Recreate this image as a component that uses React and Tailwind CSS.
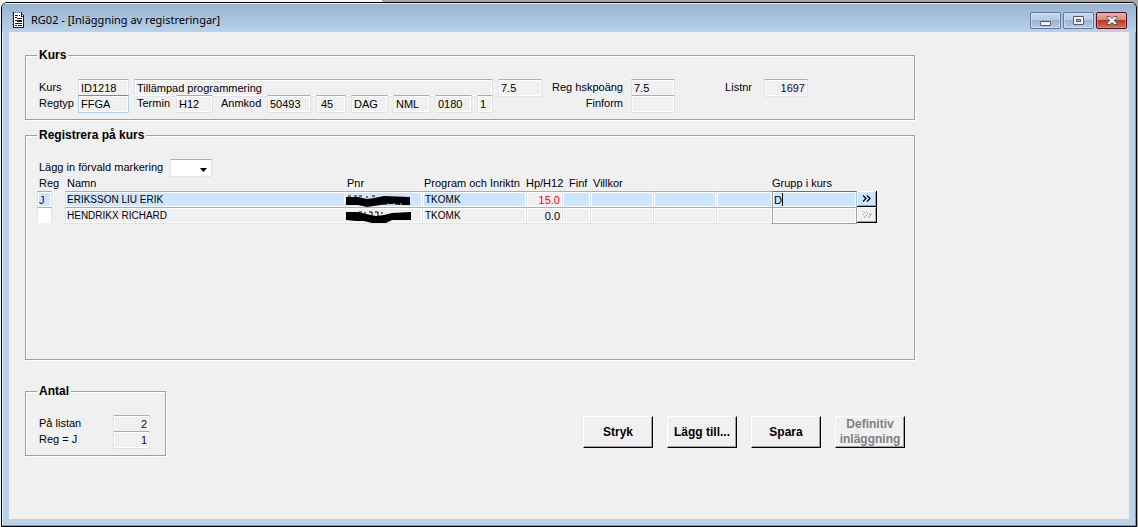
import { useState } from "react";
import clsx from "clsx";

const students = [
    { id: 1, reg: "J", name: "ERIKSSON LIU ERIK", program: "TKOMK", hp: "15.0", group: "D", active: true },
    { id: 2, reg: "", name: "HENDRIKX RICHARD", program: "TKOMK", hp: "0.0", group: "", active: false },
];

const Field = ({ id, label, value, hot, className }) => (
    <input
        id={id}
        aria-label={label}
        defaultValue={value}
        readOnly
        className={clsx(
            "h-[18px] bg-[#f0f0f0] border rounded-[1px] px-0.5 shadow-[inset_0_0_0_1px_#fff] outline-none",
            hot ? "border-[#b5cfe7] border-t-[#5794bf]" : "border-[#e2e3ea] border-t-[#abadb3]",
            className
        )}
    />
);

const Label = ({ htmlFor, className, children }) => (
    <label htmlFor={htmlFor} className={clsx("whitespace-nowrap leading-4", className)}>
        {children}
    </label>
);

const Group = ({ title, className, children }) => (
    <fieldset
        className={clsx(
            "min-w-0 border border-[#a0a0a0] shadow-[inset_1px_1px_#fff,1px_1px_#fff] px-[11px] pt-4",
            className
        )}
    >
        <legend className="bg-[#f0f0f0] px-0.5 h-4 text-xs leading-4 font-bold">{title}</legend>
        {children}
    </fieldset>
);

const ActionButton = ({ disabled, children }) => (
    <button
        type="button"
        disabled={disabled}
        className="w-[70px] h-8 flex items-center justify-center bg-[#f0f0f0] border border-white border-r-black border-b-black shadow-[inset_-1px_-1px_#a0a0a0] text-xs leading-[15px] font-bold disabled:text-[#808080]"
    >
        {children}
    </button>
);

const DocumentIcon = () => (
    <svg width="13" height="16" viewBox="0 0 13 16" shapeRendering="crispEdges">
        <path d="M1 1h8l3 3v11H1z" fill="#fff" />
        <path d="M1 0h1v15H1zM9 0h1v4h2v12H1v-1h10V5H9z" fill="#222" />
        <path d="M0 0h1v1H0zM3 0h1v1H3zM5 0h1v1H5zM7 0h1v1H7zM0 3h1v1H0zM0 6h1v1H0zM0 9h1v1H0zM0 12h1v1H0z" fill="#777" />
        <path d="M3 3h3v1H3zM7 3h1v1H7zM3 5h2v1H3zM5 6h5v1H5zM3 8h2v1H3zM5 8h5v2H5zM3 11h2v1H3zM5 11h5v1H5zM3 13h2v1H3zM6 13h4v1H6z" fill="#222" />
        <path d="M10 2h1v1h-1zM11 3h1v1h-1z" fill="#222" />
    </svg>
);

const WindowButton = ({ label, danger, children }) => (
    <button
        type="button"
        aria-label={label}
        className={clsx(
            "w-[31px] h-[17px] rounded-[2px] border flex items-center justify-center",
            danger
                ? "border-[#4c1020] bg-linear-[to_bottom,#eab0a5_0%,#db8b7c_46%,#b83a20_50%,#d4705c_100%] shadow-[inset_0_0_0_1px_#e9a99c80]"
                : "border-[#64779a] bg-linear-[to_bottom,#c6d8ea_0%,#b7cce2_46%,#98b3ce_50%,#b3cfe9_100%] shadow-[inset_0_0_0_1px_#d8e6f4aa]"
        )}
    >
        {children}
    </button>
);

const TitleBar = () => (
    <header className="h-[29px] shrink-0 flex items-center justify-between pl-[10px] pr-0.5 bg-linear-to-b from-[#98b3d1] to-[#b9d1ea] border-t border-white/70">
        <div className="flex items-center gap-[6px] pt-1">
            <DocumentIcon />
            <h1 className="font-['Noto_Sans',sans-serif] text-[11px] leading-4 whitespace-nowrap">
                RG02 - [Inläggning av registreringar]
            </h1>
        </div>
        <div className="flex gap-0.5 pt-1 pr-[7px]">
            <WindowButton label="Minimera">
                <svg width="11" height="13" viewBox="0 0 11 13">
                    <rect x=".5" y="7.5" width="10" height="4" rx=".5" fill="#f4f4f4" stroke="#535666" />
                </svg>
            </WindowButton>
            <WindowButton label="Återställ">
                <svg width="11" height="9" viewBox="0 0 11 9">
                    <rect x=".5" y=".5" width="10" height="8" rx=".5" fill="#f4f4f4" stroke="#535666" />
                    <rect x="3.5" y="3.5" width="4" height="2" fill="#a4c0e0" stroke="#535666" />
                </svg>
            </WindowButton>
            <WindowButton label="Stäng" danger>
                <svg width="12" height="9" viewBox="0 0 12 9">
                    <path
                        d="M1 .5h3l2 2 2-2h3v1L8.300 4.500 11 7.500v1H8l-2-2-2 2H1v-1l2.700-3L1 1.500z"
                        fill="#f4f4f4"
                        stroke="#535666"
                    />
                </svg>
            </WindowButton>
        </div>
    </header>
);

// Blacked out personal number
const Redacted = ({ variant }) => (
    <svg width="66" height="14" viewBox="0 0 66 14" className="block">
        {variant === 1 ? (
            <>
                <path d="M0 4L12 4L21 6L28 5L38 3L64 4L64 12L54 12L46 11L34 12L28 13L21 14L12 12L0 12z" />
                <path d="M2 3h3M8 3h3M13 3h3M21 5v-2M26 3h3" stroke="#000" />
                <path d="M41 11h2M47 11h2M54 11h2" stroke="#aab8c4" />
            </>
        ) : (
            <>
                <path d="M0 3L12 3L20 5L30 7L38 6L46 4L65 3L65 11L52 11L46 11L40 14L26 14L18 12L10 12L0 11z" />
                <path d="M13 3h3M19 5v-2M23 3h3v3M29 3h3v4M35 4h2" stroke="#000" fill="none" />
            </>
        )}
    </svg>
);

const CourseGroup = () => (
    <Group title="Kurs" className="h-[73px]">
        <div className="flex h-4 pl-0.5">
            <Label htmlFor="kurs" className="w-[39px]">Kurs</Label>
            <Field id="kurs" value="ID1218" className="w-[51px]" />
            <Field label="Kursnamn" value="Tillämpad programmering" className="w-[359px] ml-[5px]" />
            <Field label="Poäng" value="7.5" className="w-11 ml-[5px]" />
            <Label htmlFor="hskpoang" className="w-[81px] text-right">Reg hskpoäng</Label>
            <Field id="hskpoang" value="7.5" className="w-11 ml-2" />
            <Label htmlFor="listnr" className="w-[77px] text-right">Listnr</Label>
            <Field id="listnr" value="1697" className="w-11 ml-3 text-right text-[#300030]" />
        </div>
        <div className="flex h-4 pl-0.5">
            <Label htmlFor="regtyp" className="w-[39px]">Regtyp</Label>
            <Field id="regtyp" value="FFGA" hot className="w-[51px]" />
            <Label htmlFor="termin" className="w-[47px] pl-2">Termin</Label>
            <Field id="termin" value="H12" className="w-[37px]" />
            <Label htmlFor="anmkod" className="w-[54px] pl-2">Anmkod</Label>
            <div className="flex gap-[5px] w-[226px]">
                <Field id="anmkod" value="50493" className="w-11" />
                <Field label="Takt" value="45" className="w-[30px] pl-1" />
                <Field label="Tid" value="DAG" className="w-[37px]" />
                <Field label="Form" value="NML" className="w-[37px]" />
                <Field label="Ort" value="0180" className="w-[37px]" />
                <Field label="Grupp" value="1" className="w-4" />
            </div>
            <Label htmlFor="finform" className="w-[130px] text-right">Finform</Label>
            <Field id="finform" value="" className="w-11 ml-2" />
        </div>
    </Group>
);

const StudentRow = ({ student }) => {
    const [reg, setReg] = useState(student.reg);
    const [group, setGroup] = useState(student.group);
    const { active } = student;

    const cell = clsx(
        "h-4 p-0 text-[10px] leading-[15px] border-t border-t-[#a9abb5] border-l border-l-[#e0e1e9] shadow-[inset_0_0_0_1px_#fff]",
        active && "bg-[#cce6ff]"
    );

    return (
        <tr>
            <td className="p-0 h-4">
                <input
                    aria-label={`Reg ${student.name}`}
                    value={reg}
                    onChange={(e) => setReg(e.target.value)}
                    className={clsx(
                        "block w-[15px] h-4 border-t border-t-[#abadb3] border-x border-x-[#e2e3ea] px-px shadow-[inset_0_0_0_1px_#fff] outline-none",
                        active ? "bg-[#cce6ff] text-[#10106e]" : "bg-white"
                    )}
                />
            </td>
            <td className={clsx(cell, "pl-px")}>{student.name}</td>
            <td className={cell}><Redacted variant={student.id} /></td>
            <td className={clsx(cell, "pl-0.5")}>{student.program}</td>
            <td
                className={clsx(
                    "h-4 p-0 pr-0.5 text-right border-t border-t-[#a9abb5] border-l border-l-[#e0e1e9] shadow-[inset_0_0_0_1px_#fff]",
                    active && "text-[#f00020]"
                )}
            >
                {student.hp}
            </td>
            <td className={cell}></td>
            <td className={cell}></td>
            <td className={cell}></td>
            <td className={cell}></td>
            <td className="p-0 h-4">
                <div className="relative">
                    <input
                        aria-label={`Grupp i kurs ${student.name}`}
                        value={group}
                        onChange={(e) => setGroup(e.target.value)}
                        className={clsx(
                            "block w-full h-4 border-t border-x px-px shadow-[inset_0_0_0_1px_#fff] outline-none",
                            active
                                ? "bg-[#cce6ff] border-t-[#3d7bad] border-l-[#a0a0a0] border-r-[#a4c9e3]"
                                : "bg-[#f0f0f0] border-[#a0a0a0]"
                        )}
                    />
                    {active && <span className="absolute left-[10px] top-0.5 w-px h-[13px] bg-black" />}
                </div>
            </td>
            <td className="p-0 h-4">
                <button
                    type="button"
                    aria-label={`Visa mer ${student.name}`}
                    disabled={!active}
                    className={clsx(
                        "flex items-center justify-center w-5 h-4 border-r border-b border-black shadow-[inset_1px_1px_#fff,inset_-1px_-1px_#a0a0a0]",
                        active ? "bg-[#cce6ff]" : "bg-[#f0f0f0]"
                    )}
                >
                    {active ? (
                        <svg width="9" height="7" viewBox="0 0 9 7" fill="none" stroke="#000" strokeWidth="1.200">
                            <path d="M1 .5l3 3-3 3M5 .5l3 3-3 3" />
                        </svg>
                    ) : (
                        <svg width="10" height="8" viewBox="0 0 10 8" fill="#a0a0a0" shapeRendering="crispEdges">
                            <path d="M0 0h1v1H0zM2 1h1v1H2zM4 0h1v1H4zM5 2h1v1H5zM1 3h1v1H1zM8 2h1v1H8zM7 3h1v1H7zM9 3h1v1H9zM4 4h1v1H4zM3 5h1v1H3zM8 4h1v1H8zM2 6h1v1H2zM7 5h1v1H7zM6 6h1v1H6z" />
                        </svg>
                    )}
                </button>
            </td>
        </tr>
    );
};

const StudentTable = () => (
    <table className="table-fixed border-separate border-spacing-0 w-[840px] text-left leading-[14px]">
        <colgroup>
            <col className="w-7" />
            <col className="w-[280px]" />
            <col className="w-[77px]" />
            <col className="w-[104px]" />
            <col className="w-9" />
            <col className="w-7" />
            <col className="w-[63px]" />
            <col className="w-[63px]" />
            <col className="w-[56px]" />
            <col className="w-[85px]" />
            <col className="w-5" />
        </colgroup>
        <thead>
            <tr className="h-4 whitespace-nowrap">
                <th className="p-0 pl-0.5 font-normal">Reg</th>
                <th className="p-0 pl-0.5 font-normal">Namn</th>
                <th className="p-0 pl-0.5 font-normal">Pnr</th>
                <th className="p-0 pl-0.5 font-normal">Program och Inriktn</th>
                <th className="p-0 font-normal">Hp/H12</th>
                <th className="p-0 pl-[7px] font-normal">Finf</th>
                <th className="p-0 pl-[3px] font-normal">Villkor</th>
                <th className="p-0"></th>
                <th className="p-0"></th>
                <th className="p-0 font-normal">Grupp i kurs</th>
                <th className="p-0"></th>
            </tr>
        </thead>
        <tbody>
            {students.map((student) => (
                <StudentRow key={student.id} student={student} />
            ))}
            <tr className="h-px">
                <td className="p-0"></td>
                <td colSpan={8} className="p-0 border-t border-[#e2e3ea]"></td>
                <td className="p-0 border-t border-[#a0a0a0]"></td>
                <td className="p-0"></td>
            </tr>
        </tbody>
    </table>
);

export default function App() {
    return (
        <div className="min-h-screen flex flex-col pt-0.5 px-px bg-[linear-gradient(to_right,#f5f8fb_382px,#a8a8a8_382px)] font-['Liberation_Sans',Arial,sans-serif] text-[11px] text-black">
            <div className="grow flex flex-col rounded-t-[6px] overflow-hidden border border-black bg-[#b9d1ea] shadow-[inset_-1px_-1px_#35b8d8,inset_1px_0_#e8f1fa]">
                <TitleBar />
                <main className="grow mx-[7px] mb-[7px] bg-[#f0f0f0] px-4 pt-[15px] pb-8">
                    <div className="max-w-[890px]">
                        <CourseGroup />
                        <Group title="Registrera på kurs" className="mt-[7px] h-[233px]">
                            <div className="flex h-4 pl-0.5">
                                <Label htmlFor="markering" className="w-[131px]">Lägg in förvald markering</Label>
                                <div className="relative">
                                    <select
                                        id="markering"
                                        className="appearance-none block w-[42px] h-[18px] bg-white border border-[#e2e3ea] border-t-[#abadb3] outline-none"
                                    >
                                        <option></option>
                                        <option>J</option>
                                        <option>N</option>
                                    </select>
                                    <svg width="7" height="4" viewBox="0 0 7 4" className="absolute right-[5px] top-[9px] pointer-events-none">
                                        <path d="M0 0h7L3.500 4z" />
                                    </svg>
                                </div>
                            </div>
                            <StudentTable />
                        </Group>
                        <div className="flex items-start justify-between mt-[23px]">
                            <Group title="Antal" className="w-[141px] h-[73px]">
                                <div className="flex h-4 pl-0.5">
                                    <Label htmlFor="palistan" className="w-[74px]">På listan</Label>
                                    <Field id="palistan" value="2" className="w-[37px] text-right text-[#300030]" />
                                </div>
                                <div className="flex h-4 pl-0.5">
                                    <Label htmlFor="regj" className="w-[74px]">Reg = J</Label>
                                    <Field id="regj" value="1" className="w-[37px] text-right text-[#300030]" />
                                </div>
                            </Group>
                            <div className="flex gap-[14px] pt-[33px] pr-[10px]">
                                <ActionButton>Stryk</ActionButton>
                                <ActionButton>Lägg till...</ActionButton>
                                <ActionButton>Spara</ActionButton>
                                <ActionButton disabled>Definitiv inläggning</ActionButton>
                            </div>
                        </div>
                    </div>
                </main>
            </div>
        </div>
    );
}
